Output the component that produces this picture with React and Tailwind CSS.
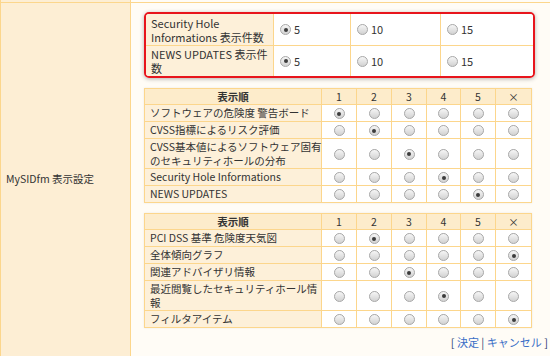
const Radio = ({ checked }) => (
  <span className="inline-flex w-[11px] h-[11px] rounded-full border border-[#a8a8a8] bg-linear-to-b from-[#f6f6f6] to-[#d2d2d2] items-center justify-center align-middle">
    {checked && <span className="w-[4px] h-[4px] rounded-full bg-[#3c3c3c]" />}
  </span>
);

const countRows = [
  { label: ["Security Hole", "Informations 表示件数"] },
  { label: ["NEWS UPDATES 表示件", "数"] },
];

const orderA = [
  { label: ["ソフトウェアの危険度 警告ボード"], pick: 0 },
  { label: ["CVSS指標によるリスク評価"], pick: 1 },
  { label: ["CVSS基本値によるソフトウェア固有", "のセキュリティホールの分布"], pick: 2 },
  { label: ["Security Hole Informations"], pick: 3 },
  { label: ["NEWS UPDATES"], pick: 4 },
];

const orderB = [
  { label: ["PCI DSS 基準 危険度天気図"], pick: 1 },
  { label: ["全体傾向グラフ"], pick: 5 },
  { label: ["関連アドバイザリ情報"], pick: 2 },
  { label: ["最近閲覧したセキュリティホール情", "報"], pick: 3 },
  { label: ["フィルタアイテム"], pick: 5 },
];

const heads = ["1", "2", "3", "4", "5", "×"];

const Lines = ({ lines }) =>
  lines.map((l, i) => (
    <span key={i} className="block whitespace-nowrap">
      {l}
    </span>
  ));

const OrderTable = ({ rows }) => (
  <table className="shrink-0 w-[387px] border-collapse table-fixed shadow-[0_0_2px_rgba(0,0,0,0.08)]">
    <colgroup>
      <col className="w-[177px]" />
      <col className="w-[35px]" />
      <col className="w-[35px]" />
      <col className="w-[35px]" />
      <col className="w-[34px]" />
      <col className="w-[35px]" />
      <col className="w-[36px]" />
    </colgroup>
    <thead>
      <tr className="bg-[#fdeccb] h-[16px]">
        <th className="border border-[#fcd68c] font-bold p-0 leading-[14px]">表示順</th>
        {heads.map((h) => (
          <th key={h} className="border border-[#fcd68c] font-normal p-0 leading-[14px]">
            {h}
          </th>
        ))}
      </tr>
    </thead>
    <tbody>
      {rows.map((r, i) => (
        <tr key={i} className={r.label.length > 1 ? "h-[30px]" : "h-[17px]"}>
          <td className="border border-[#fcd68c] bg-[#fdf0d9] px-[5px] py-0 leading-[14px]">
            <Lines lines={r.label} />
          </td>
          {heads.map((h, j) => (
            <td key={h} className="border border-[#fcd68c] bg-white text-center p-0 leading-[11px]">
              <Radio checked={r.pick === j} />
            </td>
          ))}
        </tr>
      ))}
    </tbody>
  </table>
);

export default function App() {
  return (
    <div className="w-[550px] h-[356px] overflow-hidden bg-[#fffcf6] text-[#333] text-[10.5px] font-['Noto_Sans_CJK_JP',sans-serif]">
      <div className="flex h-[2px]">
        <div className="w-[131px] bg-[#fdeed4] border-l border-r border-[#fcd68c]" />
      </div>
      <div className="flex border-t border-[#fcd68c] h-[358px]">
        <div className="w-[131px] shrink-0 bg-[#fdeed4] border-l border-r border-[#fcd68c] flex items-center pl-[5px] pb-[5px]">
          <span>MySIDfm 表示設定</span>
        </div>
        <div className="flex-1 pl-[13px] pt-[9px] flex flex-col gap-[10px]">
          <div className="shrink-0 w-[391px] border-2 border-[#e8151c] rounded-[5px] overflow-hidden shadow-[0_1px_4px_rgba(0,0,0,0.3)]">
            {countRows.map((r, i) => (
              <div key={i} className={`grid grid-cols-[128px_77px_90px_1fr] h-[31px] ${i > 0 ? "border-t border-[#fcd68c]" : ""}`}>
                <div className="bg-[#fdf0d9] border-r border-[#fcd68c] px-[5px] flex items-center leading-[14px] text-[11px]">
                  <div>
                    <Lines lines={r.label} />
                  </div>
                </div>
                {["5", "10", "15"].map((v, j) => (
                  <div key={v} className={`bg-white flex items-center gap-[3px] px-[6px] text-[11px] ${j < 2 ? "border-r border-[#fcd68c]" : ""}`}>
                    <Radio checked={j === 0} />
                    <span>{v}</span>
                  </div>
                ))}
              </div>
            ))}
          </div>
          <OrderTable rows={orderA} />
          <OrderTable rows={orderB} />
          <div className="shrink-0 w-[404px] text-right -mt-[3px] text-[#2a3d6e] text-[11px] leading-[14px]">
            [ <span className="text-[#3a6ec6]">決定</span> | <span className="text-[#3a6ec6]">キャンセル</span> ]
          </div>
        </div>
      </div>
    </div>
  );
}
